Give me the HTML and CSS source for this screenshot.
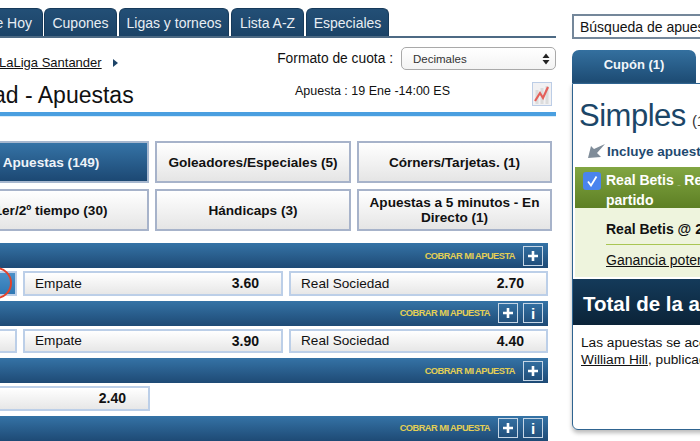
FILE: index.html
```html
<!DOCTYPE html>
<html lang="es">
<head>
  <meta charset="UTF-8" />
  <title>Apuestas</title>
  <link rel="stylesheet" href="styles.css">
</head>
<body>

  <div class="main-col">
    <div class="tabs">
      <a class="tab tab-first">e Hoy</a>
      <a class="tab tab-cupones">Cupones</a>
      <a class="tab tab-ligas">Ligas y torneos</a>
      <a class="tab tab-lista">Lista A-Z</a>
      <a class="tab tab-esp">Especiales</a>
    </div>

    <div class="crumb-row">
      <div class="crumb">
        <a class="crumb-link">LaLiga Santander</a>
        <span class="crumb-arrow"></span>
      </div>
      <div class="odds-format">
        <span>Formato de cuota :</span>
        <div class="fake-select">
          <span>Decimales</span>
          <svg width="8" height="12" viewBox="0 0 8 12"><path d="M4 0.5 7.5 5H.5z M4 11.5 .5 7h7z" fill="#222"/></svg>
        </div>
      </div>
    </div>

    <div class="title-row">
      <h1 class="page-title">ad - Apuestas</h1>
      <span class="event-date">Apuesta : 19 Ene -14:00 ES</span>
      <svg class="chart-icon" width="20" height="24" viewBox="0 0 20 24">
        <rect x=".5" y=".5" width="19" height="23" fill="#f1f1f3" stroke="#bccde6"/>
        <path d="M5 8v14M10 6v16M15 4v18" stroke="#dcdcdc" stroke-width="3"/>
        <path d="M3 19 8 11l3 5 5-11" fill="none" stroke="#e4605a" stroke-width="2.2"/>
      </svg>
    </div>

    <div class="market-grid">
      <div class="market-btn market-active">Apuestas (149)</div>
      <div class="market-btn">Goleadores/Especiales (5)</div>
      <div class="market-btn">Córners/Tarjetas. (1)</div>
      <div class="market-btn">1er/2º tiempo (30)</div>
      <div class="market-btn">Hándicaps (3)</div>
      <div class="market-btn">Apuestas a 5 minutos - En Directo (1)</div>
    </div>

    <div class="bet-head">
      <span class="cashout">COBRAR MI APUESTA</span>
      <span class="head-btn"><svg width="12" height="12" viewBox="0 0 12 12"><path d="M6 1v10M1 6h10" stroke="#fff" stroke-width="2.6"/></svg></span>
    </div>
    <div class="odds-row">
      <div class="odd odd-selected"></div>
      <div class="odd"><span>Empate</span><b>3.60</b></div>
      <div class="odd"><span>Real Sociedad</span><b>2.70</b></div>
      <span class="red-ring"></span>
    </div>

    <div class="bet-head">
      <span class="cashout">COBRAR MI APUESTA</span>
      <span class="head-btn"><svg width="12" height="12" viewBox="0 0 12 12"><path d="M6 1v10M1 6h10" stroke="#fff" stroke-width="2.6"/></svg></span>
      <span class="head-btn head-info">i</span>
    </div>
    <div class="odds-row">
      <div class="odd"></div>
      <div class="odd"><span>Empate</span><b>3.90</b></div>
      <div class="odd"><span>Real Sociedad</span><b>4.40</b></div>
    </div>

    <div class="bet-head">
      <span class="cashout">COBRAR MI APUESTA</span>
      <span class="head-btn"><svg width="12" height="12" viewBox="0 0 12 12"><path d="M6 1v10M1 6h10" stroke="#fff" stroke-width="2.6"/></svg></span>
    </div>
    <div class="odds-row">
      <div class="odd odd-single"><span></span><b>2.40</b></div>
    </div>

    <div class="bet-head">
      <span class="cashout">COBRAR MI APUESTA</span>
      <span class="head-btn"><svg width="12" height="12" viewBox="0 0 12 12"><path d="M6 1v10M1 6h10" stroke="#fff" stroke-width="2.6"/></svg></span>
      <span class="head-btn head-info">i</span>
    </div>
  </div>

  <div class="side-col">
    <div class="search-box">Búsqueda de apuestas</div>

    <div class="slip-tab">Cupón (1)</div>
    <div class="slip">
      <div class="slip-title">Simples <small>(1)</small></div>
      <div class="slip-note">
        <svg width="20" height="15" viewBox="0 0 20 15"><path d="M19 0 8 5 5 2 2 14l13-1-4-4z" fill="#7f8c99"/></svg>
        <span>Incluye apuestas</span>
      </div>

      <div class="pick-head">
        <span class="pick-check"><svg width="12" height="12" viewBox="0 0 12 12"><path d="M2 6.5 5 10.5 10.5 1.5" fill="none" stroke="#fff" stroke-width="1.8"/></svg></span>
        <span class="pick-name">Real Betis <small>_</small> Resultado del<br>partido</span>
      </div>
      <div class="pick-body">
        <div class="pick-price">Real Betis @ 2.70</div>
        <a class="pick-gain">Ganancia potencial</a>
      </div>

      <div class="slip-total">Total de la apuesta</div>
      <p class="slip-terms">Las apuestas se aceptan por<br><a>William Hill</a>, publicadas en</p>
    </div>
  </div>

</body>
</html>
```

FILE: styles.css
```css
* {
  box-sizing: border-box;
}
html, body {
  height: 441px;
}
body {
  margin: 0;
  width: 700px;
  overflow: hidden;
  display: flex;
  align-items: flex-start;
  background: #fff;
  color: #111;
  font-family: "Liberation Sans", Arial, sans-serif;
}

/* Columna principal */
.main-col {
  flex: none;
  width: 603px;
  margin-left: -47px;
  padding-top: 8px;
}
.tabs {
  display: flex;
  align-items: flex-end;
  height: 30px;
  border-bottom: 2px solid #4d6a84;
}
.tab {
  display: block;
  height: 28px;
  line-height: 29px;
  text-align: center;
  font-size: 14px;
  color: #e8eef4;
  border-radius: 6px 6px 0 0;
  background: linear-gradient(#234f76, #1b4367);
  border: 1px solid #173a5a;
  border-bottom: none;
}
.tab-first {
  width: 90px;
  text-align: right;
  padding-right: 10px;
  margin-right: 1px;
}
.tab-cupones { width: 73px; margin-right: 2px; }
.tab-ligas { width: 110px; margin-right: 2px; }
.tab-lista { width: 73px; margin-right: 2px; }
.tab-esp { width: 83px; }

.crumb-row {
  display: flex;
  justify-content: space-between;
  align-items: flex-end;
  padding-top: 9px;
}
.crumb {
  display: flex;
  align-items: center;
  margin-left: 46px;
  font-size: 13px;
}
.crumb-link {
  text-decoration: underline;
}
.crumb-arrow {
  margin-left: 11px;
  border-left: 5px solid #1d4468;
  border-top: 4px solid transparent;
  border-bottom: 4px solid transparent;
}
.odds-format {
  display: flex;
  align-items: center;
  gap: 8px;
  font-size: 13.8px;
}
.fake-select {
  display: flex;
  justify-content: space-between;
  align-items: center;
  width: 155px;
  height: 23px;
  padding: 0 5px 0 11px;
  border: 1px solid #a9a9a9;
  border-radius: 5px;
  background: linear-gradient(#fff, #f3f3f3);
  font-size: 11.5px;
  color: #333;
}

.title-row {
  display: flex;
  align-items: center;
  height: 46px;
  border-bottom: 4px solid #4a9fe0;
  padding-top: 8px;
  box-shadow: 0 1px 0 #d8ecfa;
}
.page-title {
  margin: 0 0 0 40px;
  font-size: 23px;
  font-weight: normal;
  width: 302px;
  white-space: nowrap;
}
.event-date {
  width: 237px;
  font-size: 12.5px;
  margin-bottom: 8px;
}
.chart-icon {
  flex: none;
  margin-bottom: 2px;
}

/* Botones de mercado */
.market-grid {
  display: grid;
  grid-template-columns: 196px 196px 195px;
  grid-auto-rows: 42px;
  column-gap: 6px;
  row-gap: 6px;
  margin-top: 25px;
}
.market-btn {
  display: flex;
  align-items: center;
  justify-content: center;
  text-align: center;
  padding: 0 6px;
  font-size: 13.6px;
  font-weight: bold;
  line-height: 15px;
  border: 2px solid #a7b3ca;
  background: linear-gradient(#fff, #e5e5e5);
}
.market-active {
  color: #eef3f8;
  border-color: #a7b8cf;
  background: linear-gradient(#3573a6, #1c4873);
}

/* Filas de cuotas */
.bet-head {
  display: flex;
  justify-content: flex-end;
  align-items: center;
  gap: 5px;
  width: 595px;
  height: 25px;
  margin-top: 5px;
  padding-right: 5px;
  background: linear-gradient(#3573a6, #1e4a75);
}
.market-grid + .bet-head {
  margin-top: 12px;
}
.cashout {
  margin-right: 3px;
  font-size: 9.3px;
  font-weight: bold;
  letter-spacing: -.55px;
  color: #e4cf55;
  white-space: nowrap;
}
.head-btn {
  display: flex;
  align-items: center;
  justify-content: center;
  width: 20px;
  height: 20px;
  border: 1px solid #c6d6e6;
  color: #fff;
  font-size: 15px;
  font-weight: bold;
}
.odds-row {
  position: relative;
  display: grid;
  grid-template-columns: 64px 260px 259px;
  column-gap: 6px;
  width: 595px;
  height: 24.5px;
  margin-top: 3px;
}
.odd {
  display: flex;
  justify-content: space-between;
  align-items: center;
  padding: 0 22px 0 10px;
  border: 2px solid #bccfe8;
  background: linear-gradient(#fff, #e7e7e7);
  font-size: 13.6px;
}
.odd b {
  font-size: 14px;
}
.odd-selected {
  background: linear-gradient(#4b90c8, #2f78b4);
}
.odd-single {
  grid-column: 1 / span 2;
  width: 197px;
}
.red-ring {
  position: absolute;
  left: 27px;
  top: -4px;
  width: 32px;
  height: 32px;
  border: 2px solid #e4422a;
  border-radius: 50%;
}

/* Columna derecha */
.side-col {
  flex: none;
  width: 240px;
  margin-left: 16px;
  padding-top: 14px;
}
.search-box {
  height: 25px;
  line-height: 22px;
  padding-left: 6px;
  border: 2px solid #74879a;
  font-size: 14px;
}
.slip-tab {
  width: 124px;
  height: 33px;
  margin-top: 11px;
  line-height: 29px;
  text-align: center;
  color: #f2f6fa;
  font-size: 13px;
  font-weight: bold;
  border-radius: 7px 7px 0 0;
  background: linear-gradient(#34709f, #1c4a72);
}
.slip {
  height: 347px;
  border: 1px solid #2f6490;
  border-radius: 0 0 6px 6px;
  box-shadow: 0 3px 4px #bbb;
  padding: 0 2px;
}
.slip-title {
  padding: 14px 0 0 4px;
  font-size: 31px;
  line-height: 36px;
  letter-spacing: -.5px;
  word-spacing: -2px;
  color: #1b4668;
}
.slip-title small {
  font-size: 15px;
  line-height: 1;
  letter-spacing: 0;
  color: #333;
}
.slip-note {
  display: flex;
  align-items: center;
  gap: 1px;
  height: 20px;
  margin-top: 7px;
  padding-left: 11px;
  font-size: 13.5px;
  font-weight: bold;
  color: #1f4a70;
}
.pick-head {
  display: flex;
  gap: 5px;
  height: 41px;
  margin-top: 6px;
  padding: 5px 0 0 8px;
  background: linear-gradient(#82a642, #5d7f24);
  color: #fff;
  font-size: 14px;
  font-weight: bold;
  line-height: 16.5px;
}
.pick-name small {
  font-size: 5px;
}
.pick-check {
  flex: none;
  display: flex;
  align-items: center;
  justify-content: center;
  width: 18px;
  height: 18px;
  border-radius: 3px;
  background: #4a84ee;
}
.pick-body {
  height: 69px;
  padding: 13px 0 0 31px;
  background: #eef4dd;
  font-size: 14px;
}
.pick-price {
  height: 24px;
  font-weight: bold;
  border-bottom: 1px solid #a9c653;
}
.pick-gain {
  display: block;
  margin-top: 7px;
  text-decoration: underline;
}
.slip-total {
  height: 46px;
  margin: 2px -2px 0;
  padding-left: 10px;
  line-height: 50px;
  color: #fff;
  font-size: 20.5px;
  font-weight: bold;
  background: linear-gradient(#143a5a, #0b2338);
}
.slip-terms {
  margin: 9px 0 0 6px;
  font-size: 13.7px;
  line-height: 17px;
}
.slip-terms a {
  text-decoration: underline;
}
```
